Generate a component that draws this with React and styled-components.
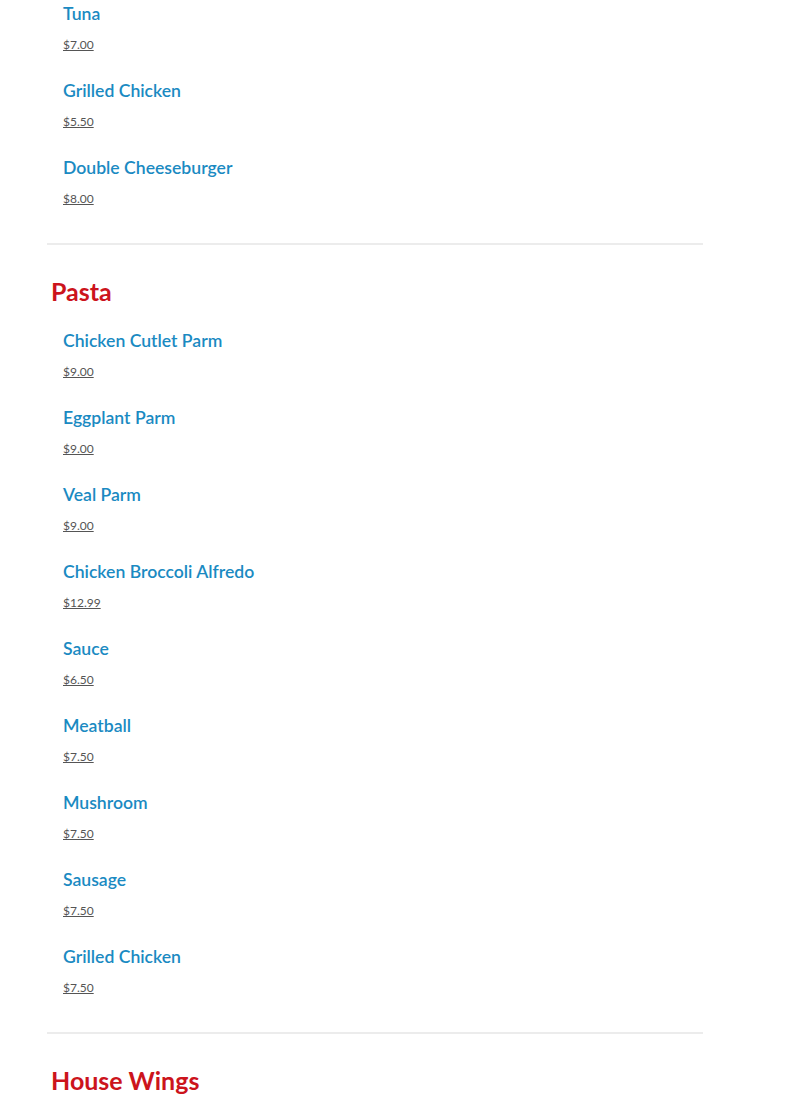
import React from 'react';
import styled, { createGlobalStyle } from 'styled-components';

const GlobalStyle = createGlobalStyle`
  body {
    margin: 0;
    background: #fff;
    font-family: Lato, "Open Sans", sans-serif;
  }
`;

const menu = [
  {
    title: null,
    items: [
      { name: 'Tuna', price: '7.00' },
      { name: 'Grilled Chicken', price: '5.50' },
      { name: 'Double Cheeseburger', price: '8.00' },
    ],
  },
  {
    title: 'Pasta',
    items: [
      { name: 'Chicken Cutlet Parm', price: '9.00' },
      { name: 'Eggplant Parm', price: '9.00' },
      { name: 'Veal Parm', price: '9.00' },
      { name: 'Chicken Broccoli Alfredo', price: '12.99' },
      { name: 'Sauce', price: '6.50' },
      { name: 'Meatball', price: '7.50' },
      { name: 'Mushroom', price: '7.50' },
      { name: 'Sausage', price: '7.50' },
      { name: 'Grilled Chicken', price: '7.50' },
    ],
  },
  {
    title: 'House Wings',
    items: [],
  },
];

function App() {
  return (
    <Page>
      <GlobalStyle />
      {menu.map((section, i) => (
        <Section key={i} last={i === menu.length - 1}>
          {section.title && <SectionTitle>{section.title}</SectionTitle>}
          <ItemList>
            {section.items.map((item, j) => (
              <Item key={j}>
                <ItemName>{item.name}</ItemName>
                <Price href="#">${item.price}</Price>
              </Item>
            ))}
          </ItemList>
        </Section>
      ))}
    </Page>
  );
}

const Page = styled.div`
  width: 656px;
  margin-left: 47px;
  padding-top: 2px;
`;

const Section = styled.section`
  padding-bottom: ${(p) => (p.last ? '0' : '36px')};
  border-bottom: ${(p) => (p.last ? 'none' : '2px solid #ececec')};
  margin-bottom: 30px;
`;

const SectionTitle = styled.h2`
  margin: 0 0 22px 4px;
  font-size: 25px;
  line-height: 32px;
  font-weight: 700;
  color: #cc141c;
`;

const ItemList = styled.div`
  display: flex;
  flex-direction: column;
  gap: 26px;
  padding-left: 16px;
`;

const Item = styled.div`
  display: flex;
  flex-direction: column;
  align-items: flex-start;
  gap: 11px;
`;

const ItemName = styled.h3`
  margin: 0;
  font-size: 17.6px;
  line-height: 24px;
  font-weight: 600;
  color: #1a8ac2;
`;

const Price = styled.a`
  font-size: 12px;
  line-height: 16px;
  color: #555;
  text-decoration: underline;
`;

export default App;
